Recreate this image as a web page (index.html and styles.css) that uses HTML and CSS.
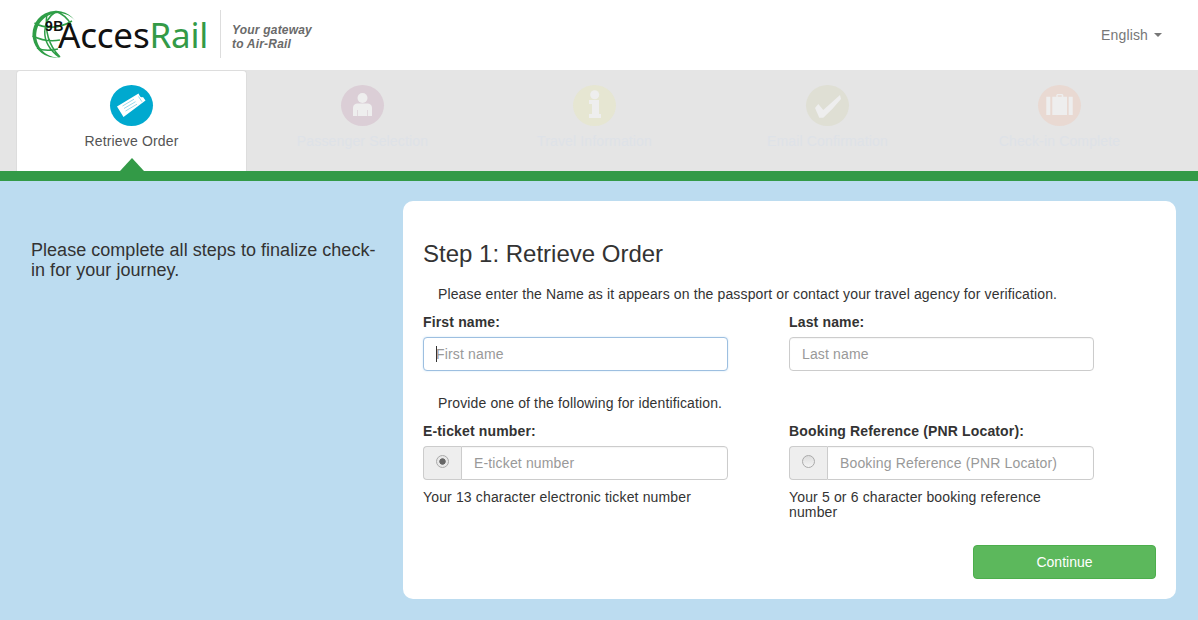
FILE: index.html
```html
<!DOCTYPE html>
<html lang="en">
<head>
<meta charset="utf-8">
<title>AccesRail Check-in</title>
<link rel="stylesheet" href="styles.css">
</head>
<body>
<header class="topbar">
  <a class="brand">
    <span class="logo">
      <svg class="globe" viewBox="0 0 52 50" width="52" height="50" fill="none" stroke="#2f9e47">
        <path fill="#2f9e47" stroke="none" d="M44 10.500A23.500 23.500 0 1 0 30 47.300A22.200 22.200 0 1 1 44 10.500z"/>
        <path stroke-width="1.500" d="M25 1.500C12 10 7 31 28 47M25 1.500C32 4 37 8 40 15M3.500 13C12 18 26 20 41 11M1.500 26C10 30 19 32 29 30M6 38C12 41 19 41 27 39M16 3C14 17 16 34 29 47"/>
      </svg>
      <b class="iata">9B</b>
      <span class="wordmark">Acces<em>Rail</em></span>
    </span>
    <span class="tagline">Your gateway<br>to Air-Rail</span>
  </a>
  <div class="lang">English<i class="caret"></i></div>
</header>

<nav class="steps">
  <div class="step active">
    <span class="disc disc-ticket">
      <svg viewBox="0 0 43 41" width="43" height="41">
        <path fill="#fff" d="M7 21.500 28.500 8.500 29.800 11Q31 13 33 12L35.500 15.500 13.500 32z"/>
        <path fill="none" stroke="#8ed6e9" stroke-width=".9" d="M12.500 21 24 14.200M14 23.500 25.500 16.700M15.500 26 27 19.200M28.500 11.500 32 16.800"/>
      </svg>
    </span>
    <span class="step-label">Retrieve Order</span>
  </div>
  <div class="step">
    <span class="disc disc-person">
      <svg viewBox="0 0 43 41" width="43" height="41">
        <circle cx="21.500" cy="13" r="5" fill="#eee"/>
        <path fill="#eee" d="M12 31V23q0-4 4-4.500h11q4 .5 4 4.500v8z"/>
        <path fill="none" stroke="#dbced6" stroke-width=".7" d="M16.500 25v6M26.500 25v6"/>
      </svg>
    </span>
    <span class="step-label">Passenger Selection</span>
  </div>
  <div class="step">
    <span class="disc disc-info">
      <svg viewBox="0 0 43 41" width="43" height="41">
        <circle cx="21.700" cy="9.700" r="4.500" fill="#eee"/>
        <path fill="#eee" d="M16 15h10v14h2v4H16v-4h3V19h-3z"/>
      </svg>
    </span>
    <span class="step-label">Travel Information</span>
  </div>
  <div class="step step-shift">
    <span class="disc disc-check">
      <svg viewBox="0 0 43 41" width="43" height="41">
        <path fill="#eee" d="M9 23 12.300 19 17.300 25 34 10 35 14Q27 24 17.300 32.700H13.300z"/>
      </svg>
    </span>
    <span class="step-label">Email Confirmation</span>
  </div>
  <div class="step">
    <span class="disc disc-case">
      <svg viewBox="0 0 43 41" width="43" height="41">
        <path fill="#eee" fill-rule="evenodd" d="M8.300 11.700h4V30h-4zM14.300 11.700h4V10l1-1h5l1 1v1.700H29V30H14.300zM19.700 10.200v1.500h4v-1.500zM30.700 11.700h4V30h-4z"/>
      </svg>
    </span>
    <span class="step-label">Check-in Complete</span>
  </div>
</nav>
<div class="rule"></div>

<main class="content">
  <p class="intro">Please complete all steps to finalize check-in for your journey.</p>
  <form class="card">
    <h2>Step 1: Retrieve Order</h2>
    <p class="note">Please enter the Name as it appears on the passport or contact your travel agency for verification.</p>
    <div class="row">
      <div class="field">
        <label>First name:</label>
        <div class="focus-wrap">
          <input class="input input-focus" type="text" placeholder="First name">
          <span class="text-cursor"></span>
        </div>
      </div>
      <div class="field">
        <label>Last name:</label>
        <input class="input" type="text" placeholder="Last name">
      </div>
    </div>
    <p class="note note-second">Provide one of the following for identification.</p>
    <div class="row">
      <div class="field">
        <label>E-ticket number:</label>
        <div class="group">
          <span class="addon"><span class="radio checked"></span></span>
          <input class="input" type="text" placeholder="E-ticket number">
        </div>
        <p class="help">Your 13 character electronic ticket number</p>
      </div>
      <div class="field">
        <label>Booking Reference (PNR Locator):</label>
        <div class="group">
          <span class="addon"><span class="radio"></span></span>
          <input class="input" type="text" placeholder="Booking Reference (PNR Locator)">
        </div>
        <p class="help">Your 5 or 6 character booking reference number</p>
      </div>
    </div>
    <div class="actions"><button class="btn" type="button">Continue</button></div>
  </form>
</main>
</body>
</html>
```
FILE: styles.css
```css
* { box-sizing: border-box; }
html, body { margin: 0; height: 100%; }
body {
  font-family: "Liberation Sans", Arial, sans-serif;
  font-size: 14px;
  line-height: 20px;
  letter-spacing: .15px;
  color: #333;
  background: #bcdcf0;
  overflow: hidden;
}
.topbar {
  height: 70px;
  background: #fff;
  display: flex;
  align-items: center;
  justify-content: space-between;
  padding: 0 36px 2px 31px;
}
.brand { display: flex; align-items: center; }
.logo {
  position: relative;
  display: block;
  width: 190px;
  height: 48px;
  border-right: 1px solid #ddd;
}
.globe { position: absolute; left: 0; top: 0; }
.iata {
  position: absolute;
  left: 14px;
  top: 8px;
  font: 700 14px/16px "Liberation Sans", sans-serif;
  letter-spacing: .4px;
  color: #111;
}
.wordmark {
  position: absolute;
  left: 27px;
  top: 4px;
  font: 400 35px/42px "Noto Sans", sans-serif;
  letter-spacing: -.2px;
  color: #111;
  white-space: nowrap;
}
.wordmark em { font-style: normal; color: #339a47; }
.tagline {
  margin: 6px 0 0 11px;
  font: italic 700 12px/14px "Liberation Sans", sans-serif;
  letter-spacing: .2px;
  color: #6a6a6a;
}
.lang { color: #777; display: flex; align-items: center; padding-top: 2px; }
.caret {
  margin-left: 6px;
  border-top: 4px solid #777;
  border-left: 4px solid transparent;
  border-right: 4px solid transparent;
}
.steps {
  height: 101px;
  background: #e5e5e5;
  display: flex;
  padding-left: 16px;
}
.step {
  width: 232px;
  display: flex;
  flex-direction: column;
  align-items: center;
  padding-top: 15px;
  color: #dee2e8;
}
.step.active {
  position: relative;
  width: 231px;
  background: #fff;
  border: 1px solid #ddd;
  border-bottom: 0;
  border-radius: 4px 4px 0 0;
  color: #555;
  padding-top: 14px;
}
.step.active + .step { margin-left: -.5px; }
.step-shift { margin-left: 1px; }
.step.active::after {
  content: "";
  position: absolute;
  left: 103px;
  bottom: 0;
  border-left: 12px solid transparent;
  border-right: 12px solid transparent;
  border-bottom: 13px solid #339a47;
}
.disc {
  width: 43px;
  height: 41px;
  border-radius: 50%;
  display: block;
}
.disc svg { display: block; }
.disc-ticket { background: #00a9cf; }
.disc-person { background: #dbced6; }
.disc-info { background: #e6e6d2; }
.disc-check { background: #dfdfd4; }
.disc-case { background: #e9d9d2; }
.step-label { margin-top: 5px; }
.rule { height: 10px; background: #339a47; }
.content {
  display: flex;
  align-items: flex-start;
  padding: 20px 22px 0 31px;
}
.intro {
  width: 372px;
  flex: none;
  margin: 39px 0 0;
  padding-right: 20px;
  font-size: 18px;
  letter-spacing: .03px;
  color: #333;
}
.card {
  flex: 1;
  height: 398px;
  background: #fff;
  border-radius: 10px;
  padding: 40px 20px 0;
}
h2 {
  margin: 0;
  font-size: 24px;
  line-height: 26px;
  font-weight: 400;
  letter-spacing: 0;
}
.note { margin: 17px 0 0; padding-left: 15px; letter-spacing: .13px; }
.note-second { margin-top: 22px; }
.row { display: flex; gap: 61px; margin-top: 8px; }
.field { width: 305px; }
label { display: block; font-weight: 700; margin-bottom: 5px; }
.focus-wrap { position: relative; }
.input {
  display: block;
  width: 100%;
  height: 34px;
  padding: 6px 12px;
  font: 14px/20px "Liberation Sans", sans-serif;
  letter-spacing: .15px;
  color: #555;
  background: #fff;
  border: 1px solid #ccc;
  border-radius: 4px;
  outline: 0;
  box-shadow: inset 0 1px 1px rgba(0,0,0,.04);
}
.input::placeholder { color: #999; opacity: 1; }
.input-focus { border-color: #9dbfe0; box-shadow: 0 0 2px rgba(102,175,233,.35); }
.text-cursor {
  position: absolute;
  left: 13px;
  top: 9px;
  width: 1px;
  height: 16px;
  background: #333;
}
.group { display: flex; }
.group .input { flex: 1; min-width: 0; border-radius: 0 4px 4px 0; }
.addon {
  width: 38px;
  flex: none;
  height: 34px;
  background: #eee;
  border: 1px solid #ccc;
  border-right: 0;
  border-radius: 4px 0 0 4px;
  display: flex;
  justify-content: center;
  padding-top: 8px;
}
.radio {
  display: block;
  width: 13px;
  height: 13px;
  border-radius: 50%;
  border: 1px solid #aaa;
  background: linear-gradient(#ddd, #f4f4f4);
}
.radio.checked { background: radial-gradient(circle, #666 0 2.8px, #e8e8e8 3.6px); }
.help { margin: 10px 0 0; line-height: 15px; width: 280px; }
.actions { display: flex; justify-content: flex-end; margin-top: 25px; }
.btn {
  width: 183px;
  height: 34px;
  background: #5cb85c;
  border: 1px solid #4cae4c;
  border-radius: 4px;
  color: #fff;
  font: 14px/20px "Liberation Sans", sans-serif;
}
```
